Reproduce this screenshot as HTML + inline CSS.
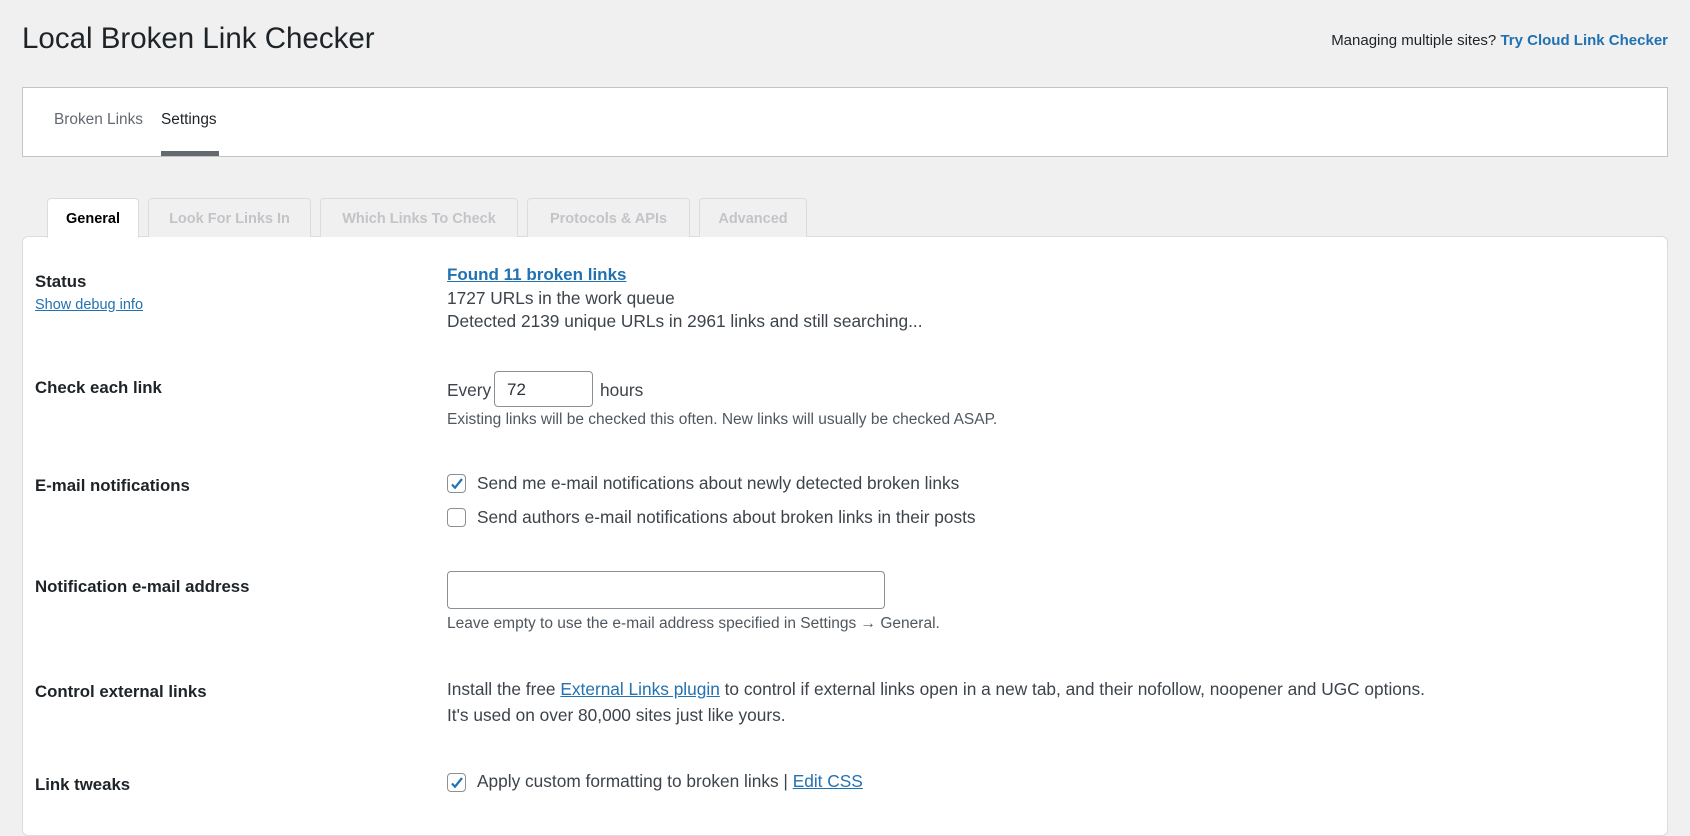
<!DOCTYPE html>
<html><head><meta charset="utf-8"><style>
*{box-sizing:border-box;margin:0;padding:0}
body{width:1690px;height:802px;overflow:hidden;background:#f0f0f1;font-family:"Liberation Sans",sans-serif;color:#3c434a;position:relative}
.a{position:absolute;white-space:nowrap}
a{color:#2271b1}
.lbl{position:absolute;left:35px;font-size:16.8px;font-weight:bold;color:#1d2327;white-space:nowrap}
.v{position:absolute;left:447px;font-size:17.3px;color:#3c434a;white-space:nowrap}
.h{position:absolute;left:447px;font-size:15.5px;color:#50575e;white-space:nowrap}
.tab{position:absolute;top:198px;height:39px;border:1px solid #dcdcde;border-bottom:none;border-radius:4px 4px 0 0;background:#f0f0f1;color:#c3c4c7;font-weight:bold;font-size:14.5px;text-align:center;line-height:40px}
.cb{position:absolute;left:447px;width:19px;height:19px;border:1px solid #8c8f94;border-radius:4px;background:#fff}
.cb svg{position:absolute;left:1px;top:1px}
</style></head><body>
<div class="a" style="left:22px;top:22px;font-size:29.5px;color:#1d2327">Local Broken Link Checker</div>
<div class="a" style="right:22px;top:32px;font-size:15px;color:#1d2327">Managing multiple sites? <b style="color:#2271b1">Try Cloud Link Checker</b></div>
<div class="a" style="left:22px;top:87px;width:1646px;height:70px;background:#fff;border:1px solid #c3c4c7"></div>
<div class="a" style="left:54px;top:111px;font-size:15.4px;color:#646970">Broken Links</div>
<div class="a" style="left:161px;top:111px;font-size:15.4px;color:#1d2327">Settings</div>
<div class="a" style="left:161px;top:151px;width:58px;height:5px;background:#646970"></div>
<div class="a" style="left:22px;top:236px;width:1646px;height:600px;background:#fff;border:1px solid #dcdcde;border-radius:6px"></div>
<div class="tab" style="left:47px;width:92px;background:#fff;color:#000;height:40px">General</div>
<div class="tab" style="left:148px;width:163px">Look For Links In</div>
<div class="tab" style="left:320px;width:198px">Which Links To Check</div>
<div class="tab" style="left:527px;width:163px">Protocols &amp; APIs</div>
<div class="tab" style="left:699px;width:108px">Advanced</div>

<div class="lbl" style="top:272px">Status</div>
<div class="a" style="left:35px;top:297px;font-size:14.5px"><a href="#">Show debug info</a></div>
<div class="v" style="top:265px;font-weight:bold;font-size:17px"><a href="#">Found 11 broken links</a></div>
<div class="v" style="top:288px">1727 URLs in the work queue</div>
<div class="v" style="top:311px">Detected 2139 unique URLs in 2961 links and still searching...</div>

<div class="lbl" style="top:378px">Check each link</div>
<div class="v" style="top:380px">Every</div>
<div class="a" style="left:494px;top:371px;width:99px;height:36px;border:1px solid #8c8f94;border-radius:4px;background:#fff;font-size:17px;padding:8px 0 0 12px;color:#2c3338">72</div>
<div class="v" style="left:600px;top:380px">hours</div>
<div class="h" style="top:411px">Existing links will be checked this often. New links will usually be checked ASAP.</div>

<div class="lbl" style="top:476px">E-mail notifications</div>
<div class="cb" style="top:474px"><svg width="16" height="16" viewBox="0 0 16 16"><path d="M3 8.5l3 3.2L13 3" fill="none" stroke="#2271b1" stroke-width="2.2"/></svg></div>
<div class="v" style="left:477px;top:473px">Send me e-mail notifications about newly detected broken links</div>
<div class="cb" style="top:508px"></div>
<div class="v" style="left:477px;top:507px">Send authors e-mail notifications about broken links in their posts</div>

<div class="lbl" style="top:577px">Notification e-mail address</div>
<div class="a" style="left:447px;top:571px;width:438px;height:38px;border:1px solid #8c8f94;border-radius:4px;background:#fff"></div>
<div class="h" style="top:615px">Leave empty to use the e-mail address specified in Settings → General.</div>

<div class="lbl" style="top:682px">Control external links</div>
<div class="v" style="top:679px">Install the free <a href="#">External Links plugin</a> to control if external links open in a new tab, and their nofollow, noopener and UGC options.</div>
<div class="v" style="top:705px">It's used on over 80,000 sites just like yours.</div>

<div class="lbl" style="top:775px">Link tweaks</div>
<div class="cb" style="top:773px"><svg width="16" height="16" viewBox="0 0 16 16"><path d="M3 8.5l3 3.2L13 3" fill="none" stroke="#2271b1" stroke-width="2.2"/></svg></div>
<div class="v" style="left:477px;top:771px">Apply custom formatting to broken links | <a href="#">Edit CSS</a></div>
</body></html>
